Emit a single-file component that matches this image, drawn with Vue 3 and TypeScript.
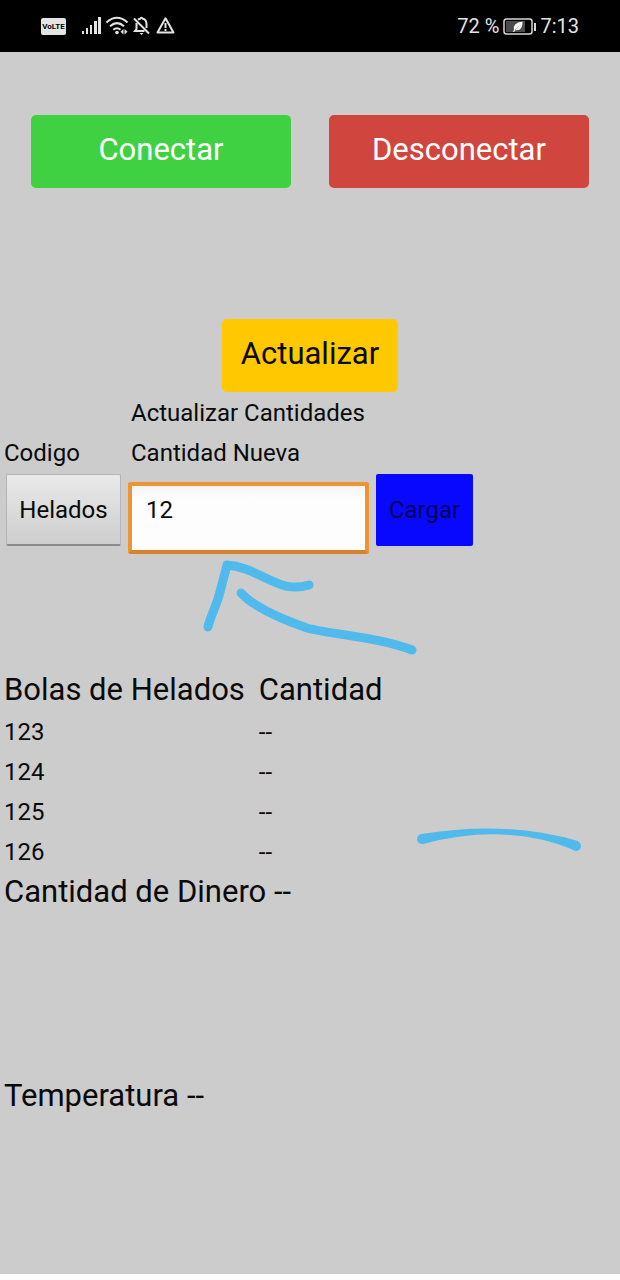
<script setup lang="ts">
import { ref } from 'vue'

interface StockRow {
  code: string
  amount: string
}

const newAmount = ref('12')
const battery = ref(72)
const clock = ref('7:13')
const money = ref('--')
const temperature = ref('--')
const stock = ref<StockRow[]>([
  { code: '123', amount: '--' },
  { code: '124', amount: '--' },
  { code: '125', amount: '--' },
  { code: '126', amount: '--' },
])
</script>

<template>
  <div class="screen">
    <header class="status">
      <div class="status-icons">
        <span class="volte">VoLTE</span>
        <svg class="signals" width="94" height="20" viewBox="0 0 94 20" aria-hidden="true">
          <!-- mobile signal -->
          <g fill="#e4e4e4">
            <rect x="0" y="15" width="2" height="3" />
            <rect x="4" y="12" width="2" height="6" />
            <rect x="8" y="9" width="2" height="9" />
            <rect x="12" y="5" width="3" height="13" />
            <rect x="16" y="1" width="3" height="17" />
          </g>
          <g fill="none" stroke="#e4e4e4" stroke-width="2">
            <!-- wifi -->
            <path d="M24.5 6.5Q35 -3 45.5 6.5" />
            <path d="M28 10.3Q35 4 42 10.3" />
            <path d="M31.3 13.8Q35 10.6 38.5 13.8" />
            <!-- muted bell -->
            <path d="M52 2.5L67 17.5" />
            <path d="M56 3.8Q57.3 2.9 58 2.8Q59.5 0.5 61 2.8Q64.5 3.8 64.5 8V12" />
            <path d="M54.5 7V13L53 15H62.5" />
            <!-- warning -->
            <path d="M83.5 2.3L91.5 16.5H75.5Z" stroke-linejoin="round" />
            <path d="M83.5 7V12M83.5 13V15" />
          </g>
          <g fill="#e4e4e4">
            <circle cx="35" cy="16.5" r="1.8" />
            <path d="M41.5 13V18.5L38.5 15.8Z" />
            <path d="M42.5 13V18.5L45.5 15.8Z" />
            <path d="M57.5 17H61.5L59.5 19Z" />
          </g>
        </svg>
      </div>
      <div class="status-info">
        <span>{{ battery }} %</span>
        <svg width="33" height="17" viewBox="0 0 33 17" aria-hidden="true">
          <rect x="1" y="1" width="28" height="15" rx="2.5" fill="none" stroke="#d8d8d8" stroke-width="1.5" />
          <rect x="3" y="3" width="19" height="11" fill="#4b4b4b" />
          <path d="M10 14L11 11.5Q9.5 5 19.5 3.5Q20 13 12.5 12.3L11 14Z" fill="#f4f4f4" />
          <path d="M12 12L16 8" stroke="#bdbdbd" stroke-width="1" />
          <rect x="31" y="5" width="2" height="8" fill="#d8d8d8" />
        </svg>
        <span>{{ clock }}</span>
      </div>
    </header>

    <main class="content">
      <div class="connection">
        <button type="button" class="big connect">Conectar</button>
        <button type="button" class="big disconnect">Desconectar</button>
      </div>

      <button type="button" class="big refresh">Actualizar</button>

      <form class="update" @submit.prevent>
        <h2 class="update-title">Actualizar Cantidades</h2>
        <span id="code-label" class="code-label">Codigo</span>
        <label for="amount" class="amount-label">Cantidad Nueva</label>
        <button type="button" class="small picker" aria-describedby="code-label">Helados</button>
        <input id="amount" v-model="newAmount" class="amount" type="text" inputmode="numeric" />
        <button type="submit" class="small load">Cargar</button>
      </form>

      <table class="stock">
        <thead>
          <tr>
            <th scope="col">Bolas de Helados</th>
            <th scope="col">Cantidad</th>
          </tr>
        </thead>
        <tbody>
          <tr v-for="row in stock" :key="row.code">
            <td>{{ row.code }}</td>
            <td>{{ row.amount }}</td>
          </tr>
        </tbody>
      </table>

      <p class="reading">Cantidad de Dinero {{ money }}</p>
      <p class="reading temperature">Temperatura {{ temperature }}</p>

      <!-- hand-drawn marks over the page -->
      <svg class="marks" width="400" height="300" viewBox="200 556 400 300" aria-hidden="true">
        <g fill="none" stroke="#50baec" stroke-width="9" stroke-linecap="round" stroke-linejoin="round">
          <path d="M208 627C211 614 217 606 221 588Q225 573 227 565C246 566 261 577 277 583Q292 590 309 585" />
          <path d="M241 593C253 606 281 619 307 628C334 635 379 637 412 650" />
        </g>
        <g fill="#50baec">
          <circle cx="422" cy="839" r="5" />
          <circle cx="576" cy="846" r="5" />
          <path d="M421 834Q506 820 578 841L574 850Q506 822 423 844Z" />
        </g>
      </svg>
    </main>
  </div>
</template>

<style>
body {
  margin: 0;
  background: #fdfdfd;
}
</style>

<style scoped>
.screen {
  font-family: Roboto, "Liberation Sans", sans-serif;
  color: #0a0a0a;
}

.status {
  display: flex;
  justify-content: space-between;
  align-items: center;
  box-sizing: border-box;
  height: 52px;
  padding: 0 41px;
  background: #000;
  color: #e4e4e4;
}

.status-icons,
.status-info {
  display: flex;
  align-items: center;
}

.status-icons {
  gap: 16px;
}

.status-info {
  gap: 4px;
  font-size: 20px;
  line-height: 24px;
}

.volte {
  width: 25px;
  border-radius: 2px;
  background: #e4e4e4;
  color: #000;
  font-size: 8px;
  font-weight: 700;
  line-height: 17px;
  text-align: center;
}

.content {
  position: relative;
  display: flex;
  flex-direction: column;
  align-items: flex-start;
  padding: 63px 0 158px;
  background: #ccc;
}

button,
input {
  box-sizing: border-box;
  margin: 0;
  border: 0;
  font-family: inherit;
  color: inherit;
}

.big {
  padding: 0 19px 3px;
  border-radius: 5px;
  font-size: 31px;
  line-height: 70px;
}

.connection {
  display: flex;
  align-self: stretch;
  gap: 38px;
  padding: 0 31px;
}

.connection .big {
  flex: 1;
  color: #fff;
}

.connect {
  background: #40d142;
}

.disconnect {
  background: #d0463e;
}

.refresh {
  align-self: center;
  margin-top: 131px;
  background: #ffc800;
}

.update {
  display: grid;
  grid-template-columns: 115px 241px 97px;
  column-gap: 7px;
  padding: 1px 6px 0;
  font-size: 24px;
  line-height: 40px;
}

.update-title {
  grid-column: 2 / 4;
  margin: 0 0 0 3px;
  font-size: 24px;
  font-weight: 400;
}

.code-label {
  grid-column: 1;
  margin-left: -2px;
}

.amount-label {
  grid-column: 2 / 4;
  margin-left: 3px;
}

.small {
  align-self: start;
  height: 72px;
  margin-top: 1px;
  padding: 0;
  border-radius: 2px;
  font-size: 24px;
}

.picker {
  border: 1px solid #b4b4b4;
  border-bottom: 2px solid #8c8c8c;
  background: linear-gradient(#e9e9e9, #cecece);
}

.load {
  background: #0808ff;
  color: #05055c;
}

.amount {
  width: 100%;
  height: 72px;
  margin-top: 9px;
  padding: 0 14px 16px;
  border: 4px solid #ee9434;
  border-bottom-color: #d9822c;
  border-radius: 3px;
  outline: 0;
  background: linear-gradient(#f4f4f4, #fdfdfd 12px);
  font-size: 24px;
}

.stock {
  margin-top: 113px;
  border-collapse: collapse;
  font-size: 24px;
  line-height: 40px;
  text-align: left;
}

.stock th,
.stock td {
  padding: 0 10px 0 4px;
}

.stock th {
  font-size: 31px;
  font-weight: 400;
  line-height: 45px;
}

.reading {
  margin: 0;
  padding: 0 4px;
  font-size: 31px;
  line-height: 40px;
}

.temperature {
  margin-top: 164px;
}

.marks {
  position: absolute;
  top: 504px;
  left: 200px;
  pointer-events: none;
}
</style>
